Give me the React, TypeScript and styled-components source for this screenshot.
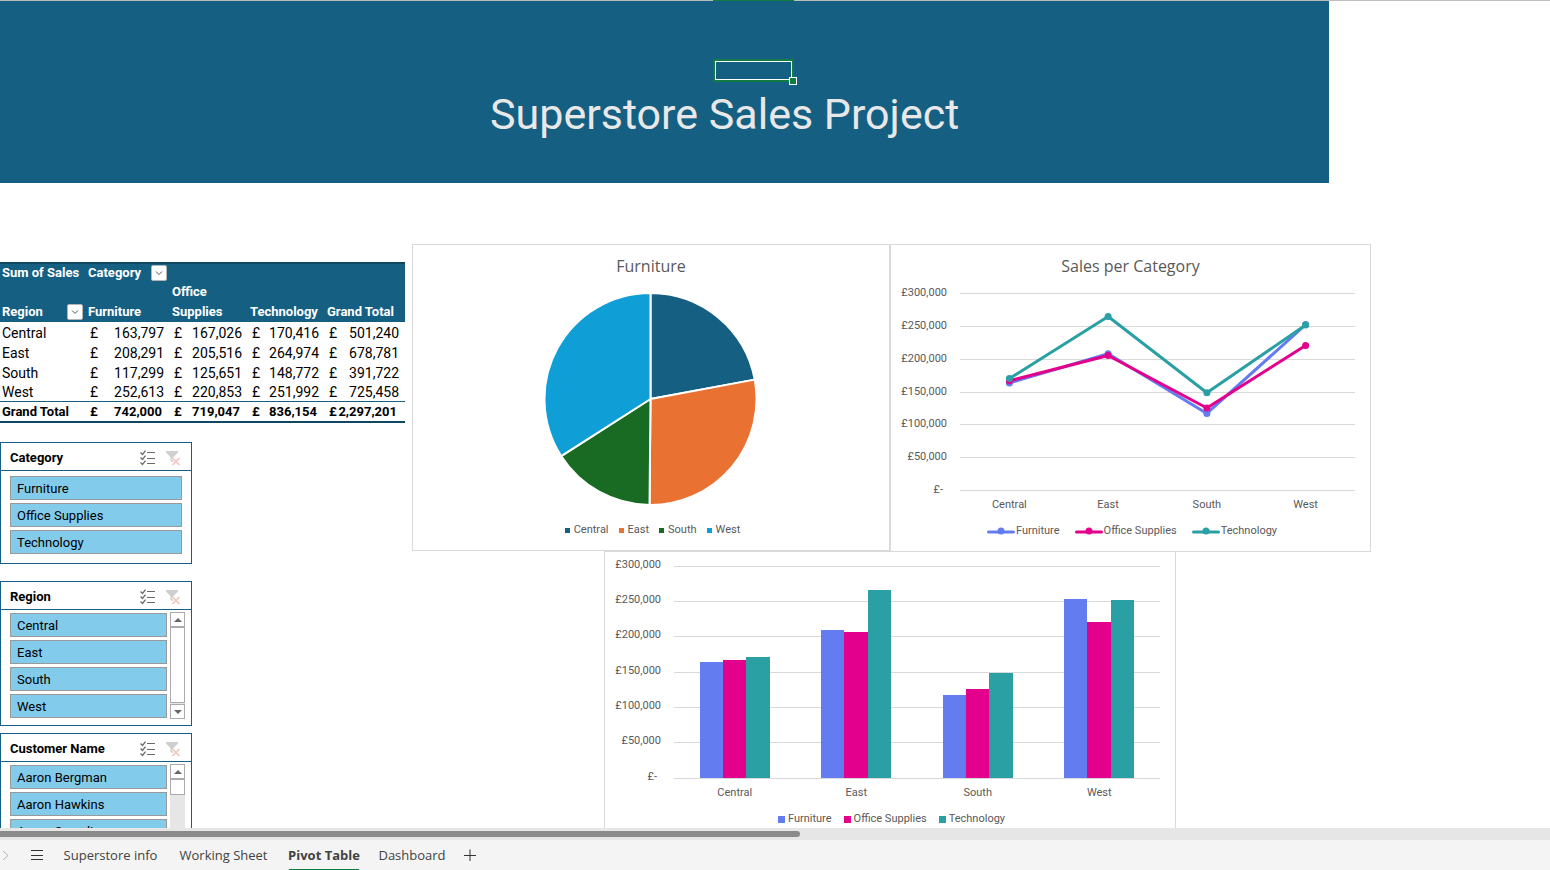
import React from "react";
import styled, { createGlobalStyle } from "styled-components";

const narrow = `Roboto, "Liberation Sans", sans-serif`;
const ui = `"Open Sans", "Noto Sans", sans-serif`;

const GlobalStyle = createGlobalStyle`
  * { box-sizing: border-box; }
  body { margin: 0; background: #fff; font-family: ${narrow}; color: #000; }
  button { font: inherit; color: inherit; margin: 0; padding: 0; border: 0; background: none; }
  h1, h2, ul { margin: 0; padding: 0; font-weight: 400; list-style: none; }
`;

const Workbook = styled.div`
  position: relative;
  display: flex;
  flex-direction: column;
  height: 100vh;
`;

const Sheet = styled.main`
  position: relative;
  flex: 1;
  min-height: 0;
  overflow: hidden;
  border-top: 1px solid #bdbdbd;
`;

const Banner = styled.header`
  width: calc(100% - 221px);
  height: 182px;
  padding: 83px 0 0 490px;
  background: #156082;
`;

const BannerTitle = styled.h1`
  font-size: 43px;
  line-height: 60px;
  color: #e8e8e8;
  white-space: nowrap;
`;

const ColumnMarker = styled.div`
  position: absolute;
  top: 0;
  left: 713px;
  width: 81px;
  height: 1px;
  background: #107c41;
`;

const ActiveCell = styled.div`
  position: absolute;
  top: 58px;
  left: 713px;
  width: 81px;
  height: 23px;
  border: 2px solid #107c41;

  &::before {
    content: "";
    position: absolute;
    inset: 0;
    border: 1px solid #fff;
  }

  &::after {
    content: "";
    position: absolute;
    right: -4px;
    bottom: -4px;
    width: 6px;
    height: 6px;
    border: 1px solid #fff;
    background: #107c41;
    transform: translate(1px, 1px);
  }
`;

const Content = styled.div`
  display: flex;
  align-items: flex-start;
  gap: 7px;
  padding: 61px 179px 0 0;
`;

const Side = styled.aside`
  flex: none;
  width: 405px;
  padding-top: 18px;
`;

const Pivot = styled.table`
  width: 100%;
  table-layout: fixed;
  border-collapse: separate;
  border-spacing: 0;
  border-top: 2px solid #0f4761;
  border-bottom: 2px solid #0f4761;
  font-size: 14px;
  line-height: 18px;

  thead { background: #156082; color: #fff; }
  th, td { padding: 0 2px; text-align: left; white-space: nowrap; font-weight: 400; height: 20px; }
  tbody th, tbody td { padding-top: 1px; }
  thead th { font-weight: 700; font-size: 13px; vertical-align: bottom; }
  thead tr:first-child th { height: 18px; }
  thead tr:last-child th { height: 40px; white-space: normal; line-height: 20px; }
  tbody tr:last-child th, tbody tr:last-child td { border-bottom: 1px solid #156082; }
  tfoot th, tfoot td { font-weight: 700; height: 19px; font-size: 13px; }
`;

const HeadCell = styled.div`
  display: flex;
  align-items: center;
  justify-content: space-between;
  padding-right: 1px;
`;

const Filter = styled.button`
  display: grid;
  place-items: center;
  width: 16px;
  height: 16px;
  border: 1px solid #b5b5b5;
  border-radius: 2px;
  background: #fff;
`;

const Money = styled.div<{ $total?: boolean }>`
  display: flex;
  justify-content: space-between;
  padding: 0 ${(p) => (p.$total ? 6 : 4)}px 0 2px;
`;

const Slicer = styled.section<{ $height: number; $gap: number }>`
  width: 192px;
  height: ${(p) => p.$height}px;
  margin-top: ${(p) => p.$gap}px;
  border: 1px solid #156082;
  background: #fff;
`;

const SlicerHead = styled.header`
  display: flex;
  align-items: center;
  height: 28px;
  padding: 2px 9px 0 9px;
  border-bottom: 1px solid #156082;
`;

const SlicerTitle = styled.h2`
  flex: 1;
  font-size: 13px;
  font-weight: 700;
`;

const IconButton = styled.button`
  display: grid;
  place-items: center;
  width: 18px;
  height: 18px;
  margin-left: 7px;
`;

const SlicerBody = styled.div<{ $top: number }>`
  display: flex;
  gap: 3px;
  padding: ${(p) => p.$top}px 6px 0 9px;
`;

const Items = styled.ul<{ $inset: number }>`
  flex: 1;
  display: flex;
  flex-direction: column;
  gap: 3px;
  padding-top: 1px;
  padding-right: ${(p) => p.$inset}px;
`;

const Item = styled.button`
  display: block;
  width: 100%;
  height: 24px;
  padding-left: 6px;
  border: 1px solid #999;
  background: #83cbeb;
  text-align: left;
  font-size: 13px;
`;

const ScrollTrack = styled.div`
  display: flex;
  flex-direction: column;
  flex: none;
  width: 15px;
  height: 107px;
  background: #e6e6e6;
`;

const ScrollArrow = styled.button`
  display: grid;
  place-items: center;
  flex: none;
  height: 15px;
  border: 1px solid #ababab;
  background: #fff;
`;

const ScrollThumb = styled.div<{ $fill: boolean }>`
  flex: ${(p) => (p.$fill ? "1" : "none")};
  height: 16px;
  margin-bottom: 1px;
  border: 1px solid #ababab;
  background: #fff;
`;

const Charts = styled.div`
  flex: 1;
  min-width: 0;
`;

const ChartRow = styled.div`
  display: flex;
  align-items: flex-start;
`;

const ChartPanel = styled.section<{ $share: number; $height: number }>`
  flex: ${(p) => p.$share} 1 0;
  min-width: 0;
  min-height: ${(p) => p.$height}px;
  border: 1px solid #d9d9d9;
  background: #fff;
`;

const BarPanel = styled.section`
  height: 300px;
  margin: -1px 195px 0 192px;
  border: 1px solid #d9d9d9;
`;

const ChartTitle = styled.h2`
  padding-top: 9px;
  height: 39px;
  font-family: ${ui};
  font-size: 16px;
  line-height: 24px;
  color: #595959;
  text-align: center;
`;

const Drawing = styled.svg`
  display: block;
  width: 100%;
  height: auto;

  text { font-family: ${narrow}; font-size: 11px; fill: #595959; }
`;

const PieDrawing = styled.svg`
  display: block;
  width: 214px;
  height: 230px;
  margin: 0 auto;
`;

const Legend = styled.ul<{ $gap: number; $height: number }>`
  display: flex;
  align-items: center;
  justify-content: center;
  gap: ${(p) => p.$gap}px;
  height: ${(p) => p.$height}px;
  padding-left: 3px;
  font-size: 11px;
  color: #595959;
`;

const LegendItem = styled.li<{ $gap: number }>`
  display: flex;
  align-items: center;
  gap: ${(p) => p.$gap}px;
`;

const Swatch = styled.span<{ $color: string; $size: number }>`
  width: ${(p) => p.$size}px;
  height: ${(p) => p.$size}px;
  margin-top: 2px;
  background: ${(p) => p.$color};
`;

const HScroll = styled.div`
  flex: none;
  height: 12px;
  padding: 3px 0;
  background: #e6e6e6;
`;

const HThumb = styled.div`
  width: 51.6%;
  height: 6px;
  border-radius: 0 3px 3px 0;
  background: #8a8a8a;
`;

const TabBar = styled.nav`
  display: flex;
  flex: none;
  height: 30px;
  background: #f4f4f4;
  font-family: ${ui};
  font-size: 13px;
  color: #424242;
`;

const BarButton = styled.button<{ $width: number }>`
  display: grid;
  place-items: center;
  width: ${(p) => p.$width}px;
`;

const Tab = styled.button<{ $active?: boolean; $width: number }>`
  width: ${(p) => p.$width}px;
  margin: 0 10px;
  border-bottom: 1px solid ${(p) => (p.$active ? "#107c41" : "transparent")};
  font-weight: ${(p) => (p.$active ? 700 : 400)};
  white-space: nowrap;
  display: flex;
  align-items: center;
  justify-content: center;
`;

const categories = ["Furniture", "Office Supplies", "Technology"];
const seriesColors = ["#637cef", "#e3008c", "#2aa0a4"];
const regions = ["Central", "East", "South", "West"];
const sales = [
  [163797, 167026, 170416, 501240],
  [208291, 205516, 264974, 678781],
  [117299, 125651, 148772, 391722],
  [252613, 220853, 251992, 725458],
];
const totals = [742000, 719047, 836154, 2297201];
const pieColors = ["#156082", "#e97132", "#196b24", "#0f9ed5"];
const ticks = [300000, 250000, 200000, 150000, 100000, 50000, 0];

const fmt = (n: number) => n.toLocaleString("en-GB");

function FilterButton({ label }: { label: string }) {
  return (
    <Filter aria-label={label}>
      <svg width="8" height="6" viewBox="0 0 8 6">
        <path d="M1 1.5l3 3 3-3" fill="none" stroke="#555" />
      </svg>
    </Filter>
  );
}

function PivotTable() {
  return (
    <Pivot>
      <colgroup>
        <col style={{ width: 86 }} />
        <col style={{ width: 84 }} />
        <col style={{ width: 78 }} />
        <col style={{ width: 77 }} />
        <col />
      </colgroup>
      <thead>
        <tr>
          <th>Sum of Sales</th>
          <th>
            <HeadCell>Category <FilterButton label="Filter category" /></HeadCell>
          </th>
          <th colSpan={3} />
        </tr>
        <tr>
          <th>
            <HeadCell>Region <FilterButton label="Filter region" /></HeadCell>
          </th>
          <th>Furniture</th>
          <th>Office Supplies</th>
          <th>Technology</th>
          <th>Grand Total</th>
        </tr>
      </thead>
      <tbody>
        {regions.map((r, i) => (
          <tr key={r}>
            <th>{r}</th>
            {sales[i].map((v, j) => (
              <td key={j}><Money><span>£</span><span>{fmt(v)}</span></Money></td>
            ))}
          </tr>
        ))}
      </tbody>
      <tfoot>
        <tr>
          <th>Grand Total</th>
          {totals.map((v) => (
            <td key={v}><Money $total><span>£</span><span>{fmt(v)}</span></Money></td>
          ))}
        </tr>
      </tfoot>
    </Pivot>
  );
}

function MultiSelectIcon() {
  return (
    <svg width="16" height="16" viewBox="0 0 16 16" fill="none" stroke="#6a6a6a">
      <path d="M7 2.500h8M7 8.500h8M7 13.500h8" />
      <path d="M.5 2.500l2 2L5.500 .7M.5 7.500l2 2L5.500 5.700M.5 12.500l2 2L5.500 10.700" strokeWidth="1.300" />
    </svg>
  );
}

function ClearFilterIcon() {
  return (
    <svg width="16" height="16" viewBox="0 0 16 16">
      <path d="M1 1h12v1.500L8.500 7v5.500L5.500 11V7L1 2.500z" fill="#cfcfcf" />
      <path d="M7.500 8l7 7M14.500 8l-7 7" stroke="#fff" strokeWidth="3" />
      <path d="M7.500 8l7 7M14.500 8l-7 7" stroke="#f4c2b8" strokeWidth="1.600" />
    </svg>
  );
}

type SlicerProps = {
  title: string;
  items: string[];
  height: number;
  gap: number;
  scroll?: "full" | "short";
};

function SlicerBox({ title, items, height, gap, scroll }: SlicerProps) {
  return (
    <Slicer $height={height} $gap={gap}>
      <SlicerHead>
        <SlicerTitle>{title}</SlicerTitle>
        <IconButton aria-label="Multi-select"><MultiSelectIcon /></IconButton>
        <IconButton aria-label="Clear filter"><ClearFilterIcon /></IconButton>
      </SlicerHead>
      <SlicerBody $top={scroll ? 2 : 4}>
        <Items $inset={scroll ? 0 : 3}>
          {items.map((t) => (
            <li key={t}><Item aria-pressed="true">{t}</Item></li>
          ))}
        </Items>
        {scroll && (
          <ScrollTrack>
            <ScrollArrow aria-label="Scroll up">
              <svg width="8" height="4"><path d="M0 4l4-4 4 4z" fill="#666" /></svg>
            </ScrollArrow>
            <ScrollThumb $fill={scroll === "full"} />
            {scroll === "full" && (
              <ScrollArrow aria-label="Scroll down">
                <svg width="8" height="4"><path d="M0 0l4 4 4-4z" fill="#666" /></svg>
              </ScrollArrow>
            )}
          </ScrollTrack>
        )}
      </SlicerBody>
    </Slicer>
  );
}

function PieChart() {
  const values = sales.map((s) => s[0]);
  const sum = values.reduce((a, b) => a + b, 0);
  const cx = 106.5;
  const cy = 115;
  const r = 106;
  let acc = 0;
  const point = (f: number) => {
    const a = f * 2 * Math.PI;
    return `${cx + r * Math.sin(a)} ${cy - r * Math.cos(a)}`;
  };
  return (
    <ChartPanel $share={478} $height={307}>
      <ChartTitle>Furniture</ChartTitle>
      <PieDrawing viewBox="0 0 214 230" role="img" aria-label="Furniture sales by region">
        {values.map((v, i) => {
          const from = acc / sum;
          acc += v;
          const to = acc / sum;
          return (
            <path
              key={i}
              d={`M${cx} ${cy}L${point(from)}A${r} ${r} 0 0 1 ${point(to)}Z`}
              fill={pieColors[i]}
              stroke="#fff"
              strokeWidth="2"
              strokeLinejoin="round"
            />
          );
        })}
      </PieDrawing>
      <Legend $gap={10} $height={31}>
        {regions.map((name, i) => (
          <LegendItem key={name} $gap={4}><Swatch $color={pieColors[i]} $size={5} />{name}</LegendItem>
        ))}
      </Legend>
    </ChartPanel>
  );
}

type AxisProps = {
  left: number;
  right: number;
  labelEnd: number;
  top: number;
  bottom: number;
  rise: number;
  snap: (n: number) => number;
};

function Axes({ left, right, labelEnd, top, bottom, rise, snap }: AxisProps) {
  const step = (right - left) / regions.length;
  return (
    <>
      {ticks.map((t) => {
        const y = snap(bottom - (t / 300000) * (bottom - top));
        return (
          <g key={t}>
            <path d={`M${left} ${y + 0.5}H${right}`} stroke="#d9d9d9" />
            <text x={t ? labelEnd : labelEnd - 4} y={y + rise} textAnchor="end">{t ? `£${fmt(t)}` : "£-"}</text>
          </g>
        );
      })}
      {regions.map((r, i) => (
        <text key={r} x={left + step * (i + 0.5)} y={bottom + 18} textAnchor="middle">{r}</text>
      ))}
    </>
  );
}

function LineChart() {
  const left = 69;
  const right = 464;
  const step = (right - left) / 4;
  const px = (i: number) => left + step * (i + 0.5);
  const py = (v: number) => 206.5 - (v / 300000) * 197;
  return (
    <ChartPanel $share={481} $height={308}>
      <ChartTitle>Sales per Category</ChartTitle>
      <Drawing viewBox="0 0 479 231" role="img" aria-label="Sales per category by region">
        <Axes left={left} right={right} labelEnd={56} top={9} bottom={206} rise={3} snap={Math.round} />
        {categories.map((c, j) => (
          <g key={c} fill={seriesColors[j]}>
            <polyline
              points={sales.map((s, i) => `${px(i)},${py(s[j])}`).join(" ")}
              fill="none"
              stroke={seriesColors[j]}
              strokeWidth="3"
              strokeLinejoin="round"
            />
            {sales.map((s, i) => <circle key={i} cx={px(i)} cy={py(s[j])} r="3.500" />)}
          </g>
        ))}
      </Drawing>
      <Legend $gap={15} $height={31}>
        {categories.map((c, j) => (
          <LegendItem key={c} $gap={1}>
            <svg width="28" height="8">
              <path d="M1.500 5h25" stroke={seriesColors[j]} strokeWidth="3" strokeLinecap="round" />
              <circle cx="14" cy="4" r="3.500" fill={seriesColors[j]} />
            </svg>
            {c}
          </LegendItem>
        ))}
      </Legend>
    </ChartPanel>
  );
}

function BarChart() {
  const left = 69;
  const right = 555;
  const step = (right - left) / 4;
  return (
    <BarPanel>
      <Drawing viewBox="0 0 570 254" role="img" aria-label="Sales by region and category">
        <Axes left={left} right={right} labelEnd={56} top={14} bottom={226} rise={2} snap={Math.floor} />
        {sales.map((s, i) =>
          categories.map((c, j) => {
            const start = left + step * i + 25.5;
            const x = Math.round(start + j * 23.4);
            const end = Math.round(start + (j + 1) * 23.4);
            const h = Math.round((s[j] / 300000) * 212 + 0.35);
            return <rect key={c + i} x={x} y={226 - h} width={end - x} height={h} fill={seriesColors[j]} />;
          })
        )}
      </Drawing>
      <Legend $gap={12} $height={24}>
        {categories.map((c, j) => (
          <LegendItem key={c} $gap={3}><Swatch $color={seriesColors[j]} $size={7} />{c}</LegendItem>
        ))}
      </Legend>
    </BarPanel>
  );
}

export default function App() {
  return (
    <>
      <GlobalStyle />
      <Workbook>
        <Sheet>
          <Banner><BannerTitle>Superstore Sales Project</BannerTitle></Banner>
          <Content>
            <Side>
              <PivotTable />
              <SlicerBox title="Category" items={categories} height={122} gap={19} />
              <SlicerBox title="Region" items={regions} height={145} gap={17} scroll="full" />
              <SlicerBox title="Customer Name" items={["Aaron Bergman", "Aaron Hawkins", "Aaron Smayling"]} height={145} gap={7} scroll="short" />
            </Side>
            <Charts>
              <ChartRow>
                <PieChart />
                <LineChart />
              </ChartRow>
              <BarChart />
            </Charts>
          </Content>
          <ActiveCell />
        </Sheet>
        <HScroll><HThumb /></HScroll>
        <TabBar aria-label="Sheets">
          <BarButton $width={20} aria-label="Next sheets">
            <svg width="20" height="12"><path d="M3 2l5 4.500L3 11" fill="none" stroke="#b5b5b5" /></svg>
          </BarButton>
          <BarButton $width={33} aria-label="All sheets">
            <svg width="12" height="10"><path d="M0 .5h12M0 5.500h12M0 9.500h12" stroke="#333" /></svg>
          </BarButton>
          <Tab $width={95}>Superstore info</Tab>
          <Tab $width={91}>Working Sheet</Tab>
          <Tab $width={70} $active aria-current="page">Pivot Table</Tab>
          <Tab $width={66}>Dashboard</Tab>
          <BarButton $width={30} aria-label="New sheet">
            <svg width="12" height="12"><path d="M0 6.500h12M6 .5v12" stroke="#333" /></svg>
          </BarButton>
        </TabBar>
        <ColumnMarker />
      </Workbook>
    </>
  );
}
